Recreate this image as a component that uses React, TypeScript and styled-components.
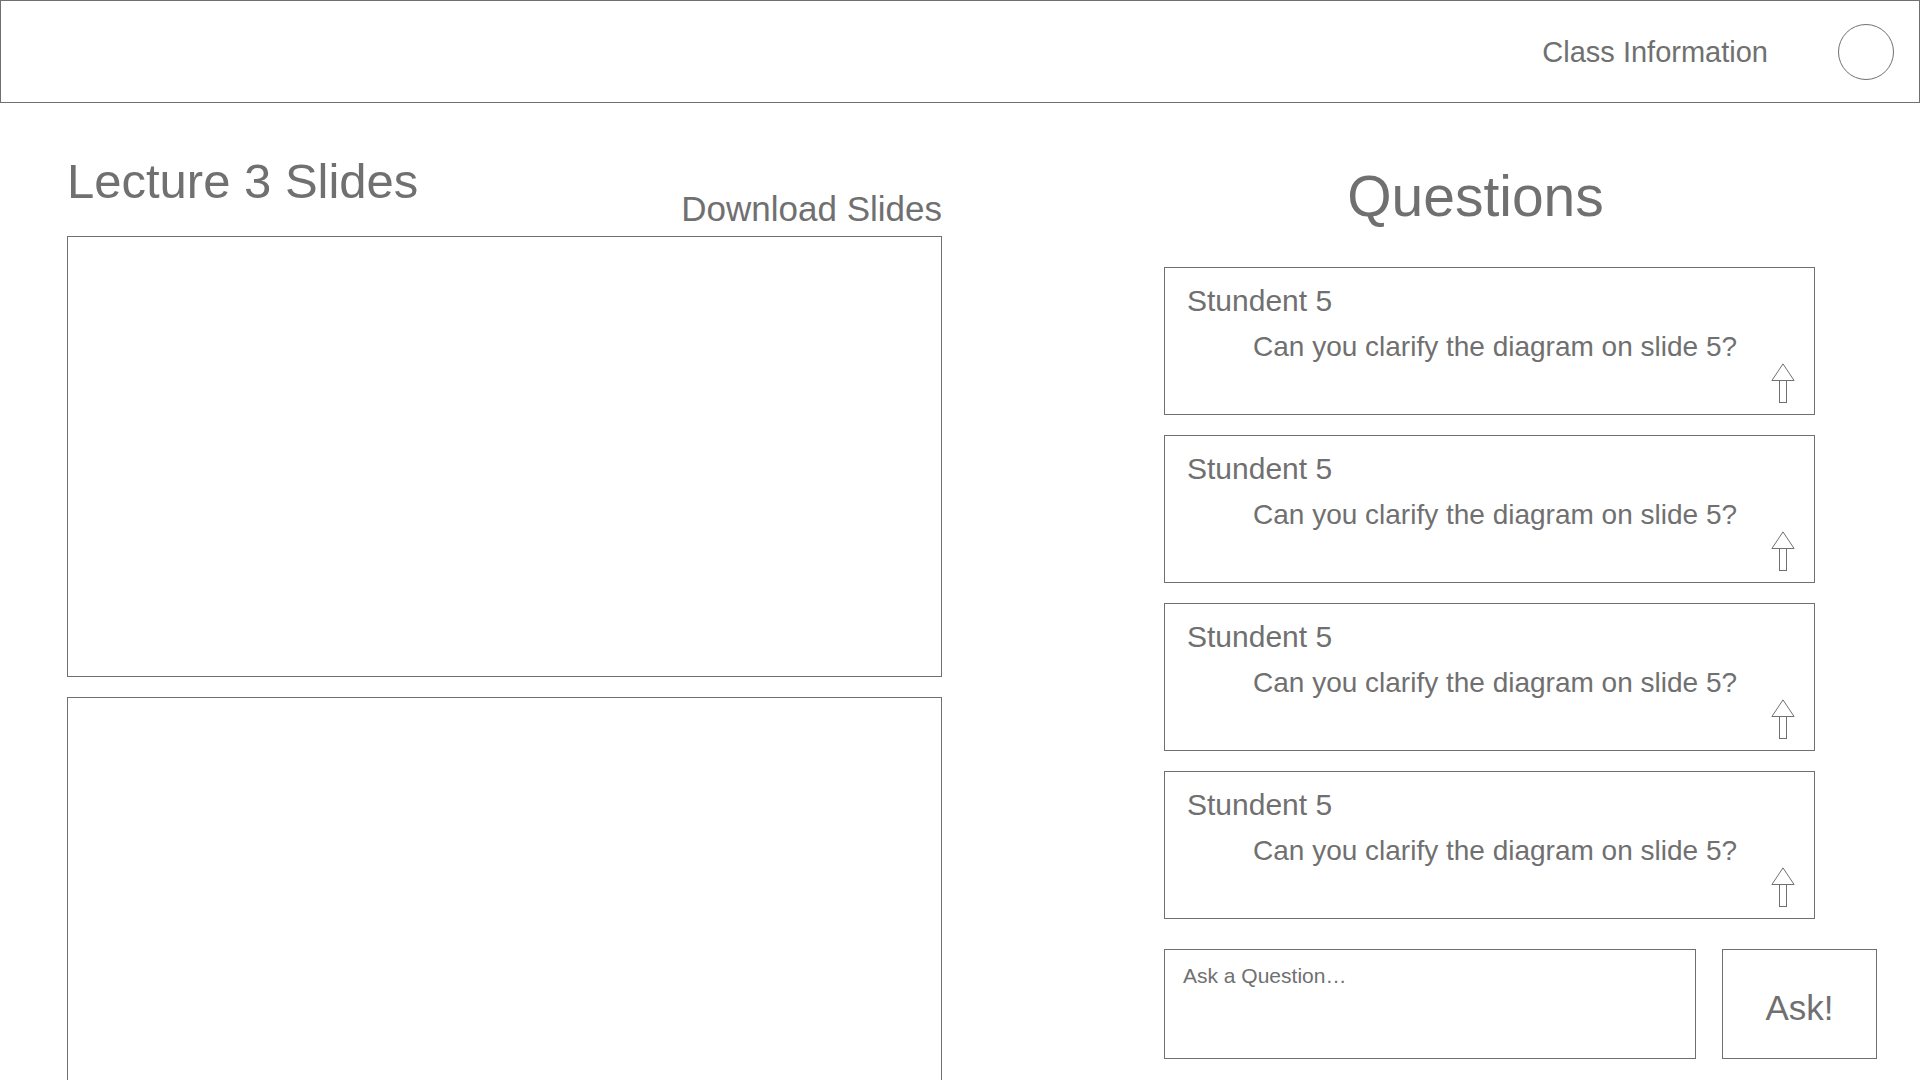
import React from "react";
import styled, { createGlobalStyle } from "styled-components";

const ink = "#707070";

const GlobalStyle = createGlobalStyle`
  *, *::before, *::after { box-sizing: border-box; }
  body {
    margin: 0;
    background: #ffffff;
    color: ${ink};
    font-family: "Liberation Sans", Arial, Helvetica, sans-serif;
  }
  h1, h2, h3, p, ul { margin: 0; padding: 0; font-weight: 400; }
  button, textarea { font: inherit; color: inherit; background: none; border-radius: 0; margin: 0; }
`;

const Page = styled.div`
  height: 100vh;
  display: flex;
  flex-direction: column;
  overflow: hidden;
`;

const TopBar = styled.header`
  flex: none;
  display: flex;
  align-items: center;
  justify-content: flex-end;
  gap: 70px;
  padding: 23px 25px 22px;
  border: 1px solid ${ink};
`;

const TextLink = styled.a<{ $size: number }>`
  color: inherit;
  text-decoration: none;
  font-size: ${(p) => p.$size}px;
  line-height: 40px;
  white-space: nowrap;
`;

const Avatar = styled.button`
  width: 56px;
  height: 56px;
  padding: 0;
  border: 1px solid ${ink};
  border-radius: 50%;
`;

const Main = styled.main`
  flex: 1;
  min-height: 0;
  display: grid;
  grid-template-columns: 875fr 713fr;
  column-gap: 222px;
  padding: 0 43px 0 67px;
`;

const Lecture = styled.section`
  min-height: 0;
  padding-top: 50px;
  overflow-y: auto;
  scrollbar-width: none;
`;

const LectureHead = styled.div`
  display: flex;
  justify-content: space-between;
  align-items: flex-end;
  margin-bottom: 7px;
`;

const LectureTitle = styled.h1`
  padding-bottom: 20px;
  font-size: 49px;
  line-height: 56px;
`;

const Slides = styled.div`
  display: grid;
  gap: 20px;
`;

const Slide = styled.div`
  height: 441px;
  border: 1px solid ${ink};
`;

const Discussion = styled.section`
  padding-top: 61px;
`;

const DiscussionTitle = styled.h2`
  padding-right: 90px;
  margin-bottom: 39px;
  font-size: 57px;
  line-height: 64px;
  text-align: center;
`;

const QuestionList = styled.ul`
  display: grid;
  gap: 20px;
  margin-right: 62px;
  list-style: none;
`;

const Card = styled.li`
  display: flex;
  flex-direction: column;
  padding: 15px 19px 11px 22px;
  border: 1px solid ${ink};
`;

const Author = styled.h3`
  font-size: 30px;
  line-height: 36px;
`;

const Question = styled.p`
  margin: 12px 0 0 66px;
  font-size: 28px;
  line-height: 32px;
`;

const Upvote = styled.button`
  align-self: flex-end;
  height: 40px;
  padding: 0;
  border: 0;
  cursor: pointer;

  svg { display: block; }
`;

const Composer = styled.form`
  display: grid;
  grid-template-columns: 1fr 155px;
  gap: 26px;
  margin-top: 30px;
`;

const QuestionInput = styled.textarea`
  display: block;
  width: 100%;
  height: 110px;
  padding: 14px 18px;
  border: 1px solid ${ink};
  font-size: 21px;
  line-height: 24px;
  resize: none;

  &::placeholder { color: inherit; opacity: 1; }
`;

const AskButton = styled.button`
  padding: 8px 0 0;
  border: 1px solid ${ink};
  font-size: 35px;
  line-height: 40px;
`;

const ArrowUp = () => (
  <svg width="24" height="40" viewBox="0 0 24 40" fill="none" stroke={ink} aria-hidden="true">
    <path d="M12 0.9 L23.1 17.5 H0.9 Z" />
    <rect x="8.5" y="17.5" width="7" height="22" />
  </svg>
);

const slides = [1, 2];
const questions = [1, 2, 3, 4].map((id) => ({
  id,
  author: "Stundent 5",
  text: "Can you clarify the diagram on slide 5?",
}));

export default function App() {
  return (
    <>
      <GlobalStyle />
      <Page>
        <TopBar>
          <TextLink href="#class" $size={29}>Class Information</TextLink>
          <Avatar type="button" aria-label="Account" />
        </TopBar>
        <Main>
          <Lecture>
            <LectureHead>
              <LectureTitle>Lecture 3 Slides</LectureTitle>
              <TextLink href="#download" $size={35}>Download Slides</TextLink>
            </LectureHead>
            <Slides>
              {slides.map((n) => (
                <Slide key={n} />
              ))}
            </Slides>
          </Lecture>
          <Discussion>
            <DiscussionTitle>Questions</DiscussionTitle>
            <QuestionList>
              {questions.map((q) => (
                <Card key={q.id}>
                  <Author>{q.author}</Author>
                  <Question>{q.text}</Question>
                  <Upvote type="button" aria-label="Upvote">
                    <ArrowUp />
                  </Upvote>
                </Card>
              ))}
            </QuestionList>
            <Composer onSubmit={(e) => e.preventDefault()}>
              <QuestionInput aria-label="Ask a question" placeholder="Ask a Question…" />
              <AskButton type="submit">Ask!</AskButton>
            </Composer>
          </Discussion>
        </Main>
      </Page>
    </>
  );
}
